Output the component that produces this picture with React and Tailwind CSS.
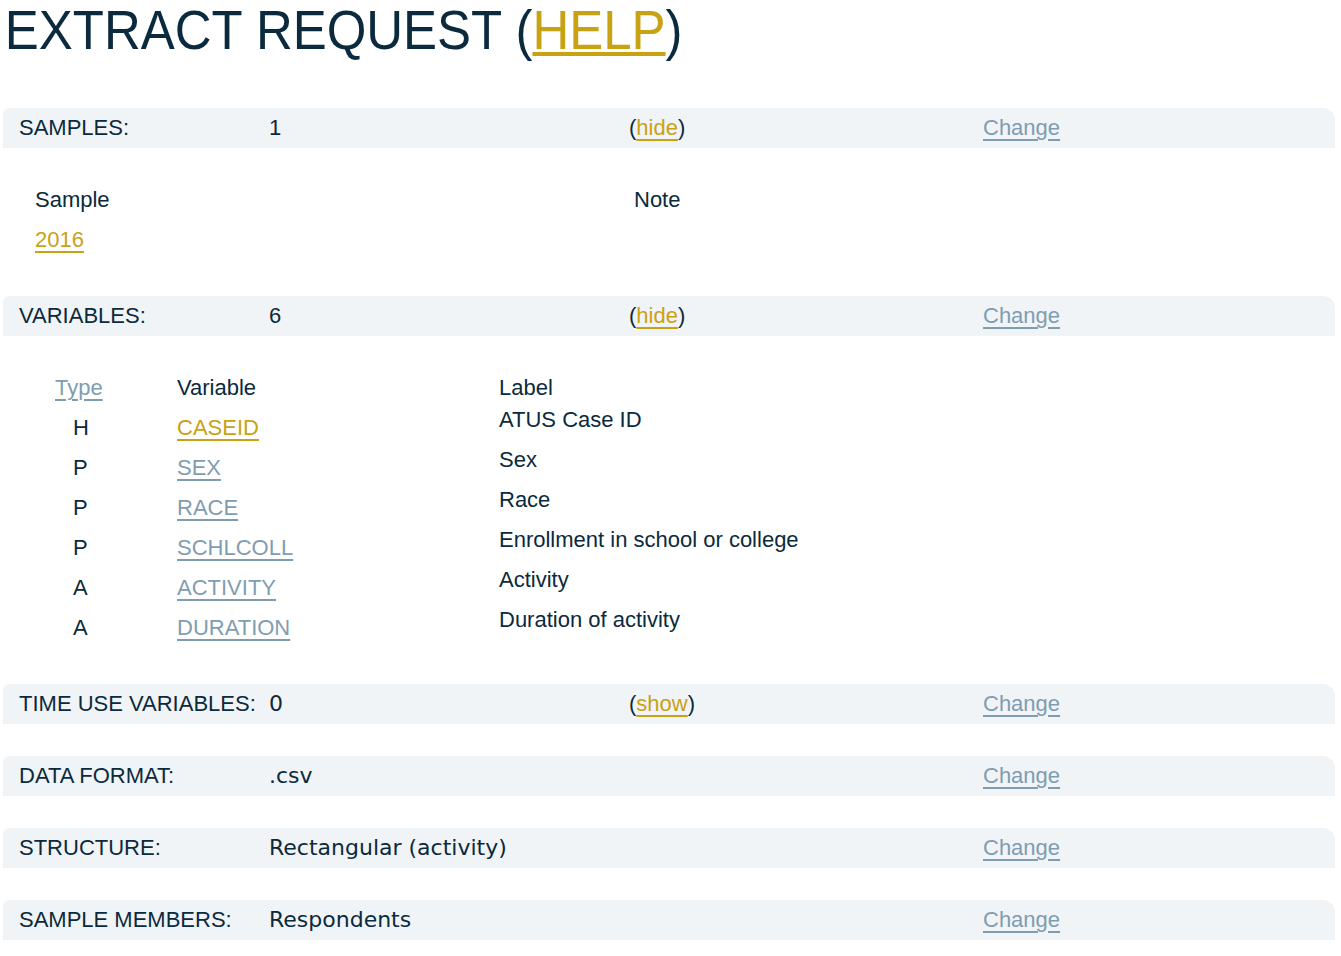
const font = { fontFamily: '"Liberation Sans", Arial, sans-serif' };

const Bar = ({ label, value, toggle, wide, className = '' }) => (
  <div className={`flex h-10 items-center whitespace-nowrap rounded-tl-md rounded-tr-xl bg-[#f0f4f7] pl-4 ${className}`}>
    <span className="w-[250px] shrink-0">{label}</span>
    <span className={`w-[360px] shrink-0 ${wide ? "font-['DejaVu_Sans']" : ''}`}>{value}</span>
    <span className="w-[354px] shrink-0">
      {toggle && (
        <>
          (<a className="text-[#c9a213] underline decoration-2 underline-offset-[4px]">{toggle}</a>)
        </>
      )}
    </span>
    <a className="text-[#7f9db1] underline decoration-2 underline-offset-[4px]">Change</a>
  </div>
);

const variables = [
  { type: 'H', name: 'CASEID', label: 'ATUS Case ID', gold: true },
  { type: 'P', name: 'SEX', label: 'Sex' },
  { type: 'P', name: 'RACE', label: 'Race' },
  { type: 'P', name: 'SCHLCOLL', label: 'Enrollment in school or college' },
  { type: 'A', name: 'ACTIVITY', label: 'Activity' },
  { type: 'A', name: 'DURATION', label: 'Duration of activity' }
];

export default function App() {
  return (
    <div className="min-h-screen bg-white pr-[6px] pl-[3px] text-[22px] leading-none text-[#0b2a3d]" style={font}>
      {/* Title */}
      <h1 className="origin-left scale-x-[0.91] whitespace-nowrap pl-[2px] text-[56px] leading-[60px]">
        EXTRACT REQUEST (<a className="text-[#c9a213] underline decoration-[4px] underline-offset-[3px]">HELP</a>)
      </h1>

      {/* Samples */}
      <Bar label="SAMPLES:" value="1" toggle="hide" className="mt-12" />
      <div className="flex pt-8 pb-9 pl-8">
        <div className="w-[599px]">
          <div className="h-10 leading-10">Sample</div>
          <div className="h-10 leading-10">
            <a className="text-[#c9a213] underline decoration-2 underline-offset-[4px]">2016</a>
          </div>
        </div>
        <div className="h-10 leading-10">Note</div>
      </div>

      {/* Variables */}
      <Bar label="VARIABLES:" value="6" toggle="hide" />
      <div className="pt-8 pb-9">
        <div className="flex h-10 items-center">
          <div className="w-[174px] pl-[52px]">
            <a className="text-[#7f9db1] underline decoration-2 underline-offset-[4px]">Type</a>
          </div>
          <div className="w-[322px]">Variable</div>
          <div>Label</div>
        </div>
        {variables.map((v) => (
          <div key={v.name} className="flex h-10 items-center">
            <div className="w-[174px] pl-[70px]">{v.type}</div>
            <div className="w-[322px]">
              <a className={`underline decoration-2 underline-offset-[4px] ${v.gold ? 'text-[#c9a213]' : 'text-[#7f9db1]'}`}>{v.name}</a>
            </div>
            <div className="-translate-y-2">{v.label}</div>
          </div>
        ))}
      </div>

      <Bar label="TIME USE VARIABLES:" value="0" toggle="show" wide />
      <Bar label="DATA FORMAT:" value=".csv" wide className="mt-8" />
      <Bar label="STRUCTURE:" value="Rectangular (activity)" wide className="mt-8" />
      <Bar label="SAMPLE MEMBERS:" value="Respondents" wide className="mt-8" />
    </div>
  );
}
